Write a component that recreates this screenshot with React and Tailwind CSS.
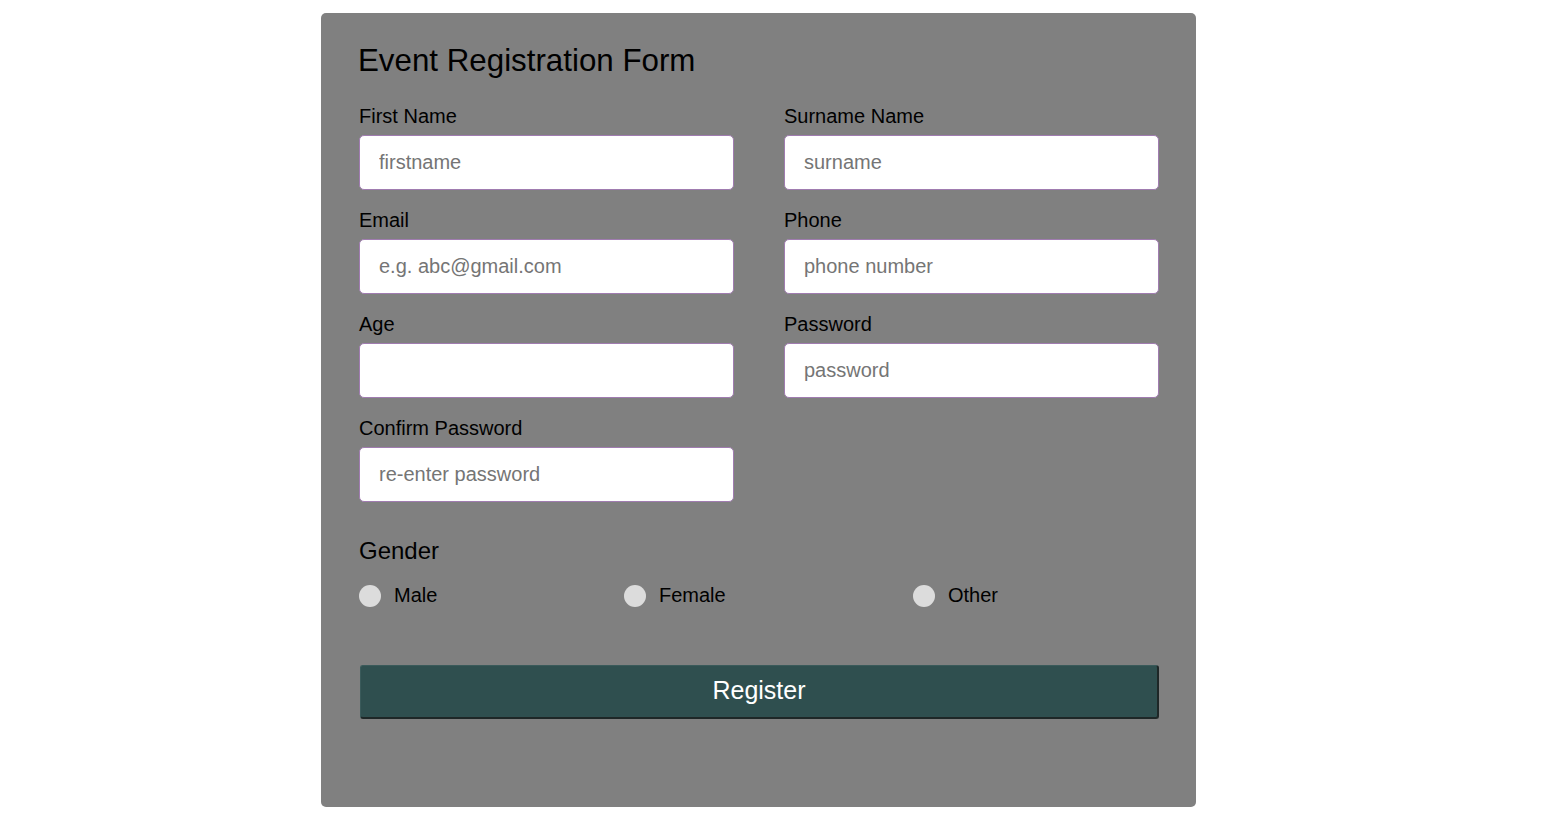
import React from 'react';

const fields = [
  { label: 'First Name', placeholder: 'firstname', type: 'text' },
  { label: 'Surname Name', placeholder: 'surname', type: 'text' },
  { label: 'Email', placeholder: 'e.g. abc@gmail.com', type: 'email' },
  { label: 'Phone', placeholder: 'phone number', type: 'tel' },
  { label: 'Age', placeholder: '', type: 'number' },
  { label: 'Password', placeholder: 'password', type: 'password' },
  { label: 'Confirm Password', placeholder: 're-enter password', type: 'password' },
];

const genders = [
  { label: 'Male', width: 'w-[265px]' },
  { label: 'Female', width: 'w-[289px]' },
  { label: 'Other', width: '' },
];

export default function App() {
  return (
    <div className="min-h-screen bg-white pt-[13px] font-['Liberation_Sans',Arial,sans-serif] text-black">
      <form className="ml-[321px] w-[875px] rounded-[5px] bg-[#808080] pl-[38px] pr-[37px] pt-[30px] pb-[88px]">
        <h2 className="mb-[26px] -ml-px text-[31.3px] leading-[36px]">Event Registration Form</h2>

        {/* Fields */}
        <div className="grid grid-cols-2 gap-x-[50px] gap-y-[19px]">
          {fields.map((f) => (
            <div key={f.label} className="flex flex-col">
              <label className="mb-[7px] text-[20px] leading-[23px]">{f.label}</label>
              <input
                type={f.type}
                placeholder={f.placeholder}
                className="h-[55px] rounded-[5px] border border-[#a07cb0] bg-white px-[19px] text-[20px] text-black placeholder:text-[#757575] focus:outline-none"
              />
            </div>
          ))}
        </div>

        {/* Gender */}
        <h3 className="mt-[35px] text-[24px] leading-[28px]">Gender</h3>
        <div className="mt-[19px] flex items-center">
          {genders.map((g) => (
            <label key={g.label} className={`flex items-center ${g.width}`}>
              <span className="h-[22px] w-[22px] rounded-full bg-[#dcdcdc]"></span>
              <span className="ml-[13px] text-[20px] leading-[23px]">{g.label}</span>
            </label>
          ))}
        </div>

        <button
          type="button"
          className="mt-[58px] ml-px flex h-[54px] w-[799px] items-center justify-center rounded-[3px] border-t border-l border-r-2 border-b-2 border-t-[#3a5a5a] border-l-[#3a5a5a] border-r-[#1e2727] border-b-[#1e2727] bg-[#2f4f4f] pb-[2px] text-[25px] text-white"
        >
          Register
        </button>
      </form>
    </div>
  );
}
